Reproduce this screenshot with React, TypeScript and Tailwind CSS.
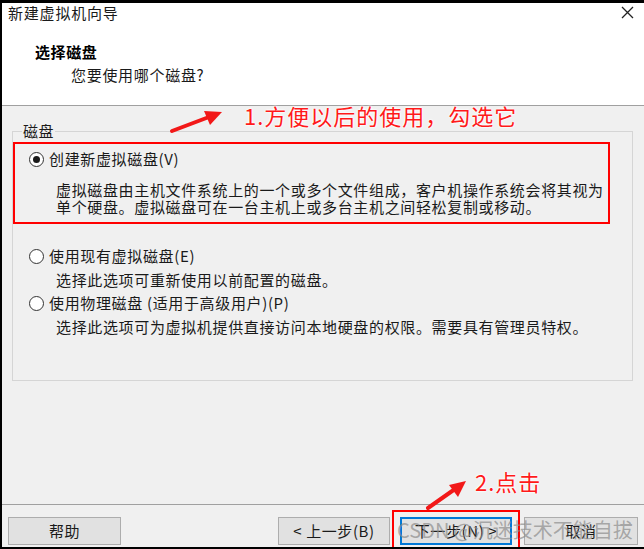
import React from "react";

const Radio = ({ checked }: { checked?: boolean }) => (
  <span className="w-[15px] h-[15px] rounded-full border border-[#333333] bg-white flex items-center justify-center shrink-0">
    {checked && <span className="w-[7px] h-[7px] rounded-full bg-[#1a1a1a]" />}
  </span>
);

const Btn = ({ children, primary, w }: { children: React.ReactNode; primary?: boolean; w: string }) => (
  <div
    className={
      "h-[28px] flex items-center justify-center bg-[#e1e1e1] text-[15px] tracking-[0.6px] text-[#1a1a1a] " +
      w +
      (primary ? " border-2 border-[#0078d7]" : " border border-[#adadad]")
    }
  >
    {children}
  </div>
);

export default function App() {
  return (
    <div className="relative w-[644px] h-[549px] overflow-hidden font-['Noto_Sans_CJK_SC','Noto_Sans',sans-serif]">
      <div className="w-[644px] h-[549px] flex flex-col bg-[#f0f0f0] border-t-[3px] border-l-2 border-b-2 border-black">
        {/* header */}
        <div className="h-[103px] bg-white border-b border-[#a0a0a0] flex flex-col">
          <div className="h-[20px] flex items-center justify-between pl-[6px] pr-[10px]">
            <span className="text-[15px] leading-[20px] tracking-[0.8px] text-[#1a1a1a]">新建虚拟机向导</span>
            <svg width="13" height="13" viewBox="0 0 13 13" className="mt-[-2px]">
              <path d="M1 1 L12 12 M12 1 L1 12" stroke="#222" strokeWidth="1.3" />
            </svg>
          </div>
          <div className="mt-[19px] pl-[33px] text-[15px] leading-[20px] tracking-[0.6px] font-bold text-black">选择磁盘</div>
          <div className="mt-[3px] pl-[69px] text-[15px] leading-[20px] tracking-[0.7px] text-[#1a1a1a]">您要使用哪个磁盘?</div>
        </div>

        {/* body */}
        <div className="flex-1 flex flex-col">
          <fieldset className="mt-[15px] ml-[10px] w-[621px] h-[260px] border border-[#d5d5d5]">
            <legend className="ml-[9px] px-[1px] text-[15px] leading-[20px] tracking-[0.5px] text-[#1a1a1a]">磁盘</legend>
            <div className="mt-[1px] ml-[0px] w-[597px] h-[82px] border-2 border-[#ff0000] flex flex-col">
              <div className="mt-[5px] ml-[14px] h-[20px] flex items-center gap-[5px]">
                <Radio checked />
                <span className="text-[15px] leading-[20px] text-[#1a1a1a] tracking-[0.65px]">创建新虚拟磁盘(V)</span>
              </div>
              <div className="mt-[12px] ml-[41px] text-[15px] leading-[17px] text-[#1a1a1a] tracking-[0.65px] whitespace-nowrap">
                <div>虚拟磁盘由主机文件系统上的一个或多个文件组成，客户机操作系统会将其视为</div>
                <div>单个硬盘。虚拟磁盘可在一台主机上或多台主机之间轻松复制或移动。</div>
              </div>
            </div>
            <div className="mt-[22px] ml-[16px] h-[20px] flex items-center gap-[5px]">
              <Radio />
              <span className="text-[15px] leading-[20px] text-[#1a1a1a] tracking-[0.65px]">使用现有虚拟磁盘(E)</span>
            </div>
            <div className="mt-[5px] ml-[43px] text-[15px] leading-[18px] text-[#1a1a1a] tracking-[0.65px] whitespace-nowrap">
              选择此选项可重新使用以前配置的磁盘。
            </div>
            <div className="mt-[4px] ml-[16px] h-[20px] flex items-center gap-[5px]">
              <Radio />
              <span className="text-[15px] leading-[20px] text-[#1a1a1a] tracking-[0.65px]">使用物理磁盘 (适用于高级用户)(P)</span>
            </div>
            <div className="mt-[5px] ml-[43px] text-[15px] leading-[18px] text-[#1a1a1a] tracking-[0.65px] whitespace-nowrap">
              选择此选项可为虚拟机提供直接访问本地硬盘的权限。需要具有管理员特权。
            </div>
          </fieldset>
        </div>

        {/* footer */}
        <div className="h-[43px] border-t border-[#a0a0a0] pt-[12px] pl-[6px] pr-[6px] flex items-start">
          <Btn w="w-[113px]">帮助</Btn>
          <div className="flex-1" />
          <Btn w="w-[112px]">&lt; 上一步(B)</Btn>
          <div className="w-[10px]" />
          <Btn w="w-[112px]" primary>下一步(N) &gt;</Btn>
          <div className="w-[12px]" />
          <Btn w="w-[114px]">取消</Btn>
        </div>
      </div>

      {/* annotations */}
      <div className="absolute left-[244px] top-[101px] text-[22px] leading-[28px] tracking-[1px] text-[#ff1a1a] whitespace-nowrap [text-shadow:0_0_2px_#fff,0_0_2px_#fff,0_0_3px_#fff]">
        1.方便以后的使用，勾选它
      </div>
      <div className="absolute left-[475px] top-[467px] text-[22px] leading-[28px] tracking-[1px] text-[#ff1a1a] whitespace-nowrap [text-shadow:0_0_2px_#fff,0_0_2px_#fff,0_0_3px_#fff]">
        2.点击
      </div>
      <div className="absolute left-[392px] top-[510px] w-[128px] h-[37px] border-2 border-b-0 border-[#ff0000]" />
      <svg className="absolute left-0 top-0 pointer-events-none" width="644" height="549" viewBox="0 0 644 549">
        <line x1="172" y1="131" x2="209" y2="117" stroke="#f21818" strokeWidth="4" strokeLinecap="round" />
        <polygon points="222,112 210,125 204,111" fill="#f21818" />
        <line x1="428" y1="508" x2="455" y2="489" stroke="#f21818" strokeWidth="4" strokeLinecap="round" />
        <polygon points="466,481 458,497 449,485" fill="#f21818" />
      </svg>
      <div className="absolute left-[397px] top-[517px] text-[20px] leading-[26px] text-[#8c8c8c]/70 whitespace-nowrap">
        CSDN @沉迷技术不能自拔
      </div>
    </div>
  );
}
